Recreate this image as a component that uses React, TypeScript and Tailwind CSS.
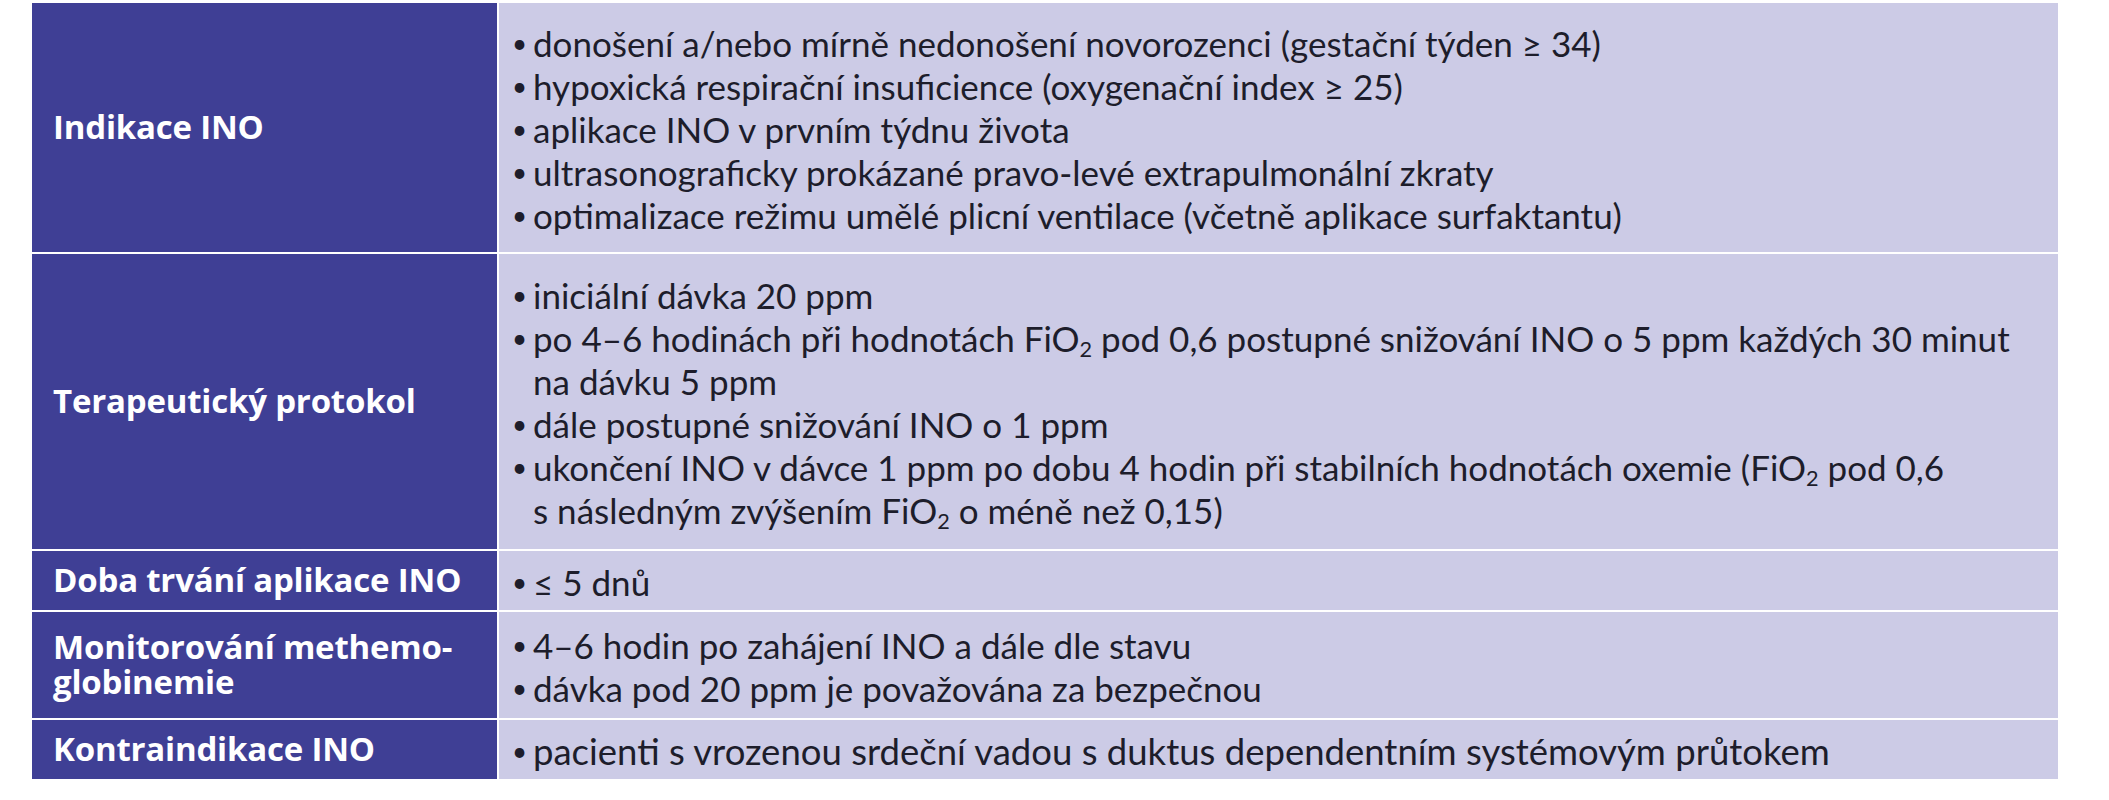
import React from "react";

type Row = {
  label: React.ReactNode;
  h: string;
  items: React.ReactNode[];
  big?: boolean;
};

const Sub = () => <sub className="text-[0.62em] leading-none">2</sub>;

const rows: Row[] = [
  {
    label: "Indikace INO",
    h: "h-[249px]",
    items: [
      "donošení a/nebo mírně nedonošení novorozenci (gestační týden ≥ 34)",
      "hypoxická respirační insuficience (oxygenační index ≥ 25)",
      "aplikace INO v prvním týdnu života",
      "ultrasonograficky prokázané pravo-levé extrapulmonální zkraty",
      "optimalizace režimu umělé plicní ventilace (včetně aplikace surfaktantu)",
    ],
  },
  {
    label: "Terapeutický protokol",
    h: "h-[295px]",
    items: [
      "iniciální dávka 20 ppm",
      <>
        po 4–6 hodinách při hodnotách FiO<Sub /> pod 0,6 postupné snižování INO o 5 ppm každých 30 minut
        <br />
        na dávku 5 ppm
      </>,
      "dále postupné snižování INO o 1 ppm",
      <>
        ukončení INO v dávce 1 ppm po dobu 4 hodin při stabilních hodnotách oxemie (FiO<Sub /> pod 0,6
        <br />s následným zvýšením FiO<Sub /> o méně než 0,15)
      </>,
    ],
  },
  {
    label: "Doba trvání aplikace INO",
    h: "h-[59px]",
    items: ["≤ 5 dnů"],
  },
  {
    label: (
      <>
        Monitorování methemo-
        <br />
        globinemie
      </>
    ),
    h: "h-[106px]",
    items: [
      "4–6 hodin po zahájení INO a dále dle stavu",
      "dávka pod 20 ppm je považována za bezpečnou",
    ],
  },
  {
    label: "Kontraindikace INO",
    h: "h-[59px]",
    big: true,
    items: ["pacienti s vrozenou srdeční vadou s duktus dependentním systémovým průtokem"],
  },
];

export default function App() {
  return (
    <div className="w-[2109px] h-[800px] bg-white pt-[3px] pl-[32px]">
      <div className="w-[2026px] flex flex-col gap-[2px]">
        {rows.map((r, i) => (
          <div key={i} className={`flex gap-[2px] ${r.h}`}>
            <div className="w-[465px] shrink-0 bg-[#3f3f95] flex items-center pl-[21px] pb-[2px]">
              <div className="font-['Open_Sans',sans-serif] font-bold text-[33px] leading-[35px] text-white tracking-[-0.2px]">
                {r.label}
              </div>
            </div>
            <div className="flex-1 bg-[#cccbe6] flex flex-col justify-center pl-[13px] pt-[3px] font-['Lato',sans-serif] text-[#1d1d2b]">
              {r.items.map((it, j) => (
                <div
                  key={j}
                  className={`flex whitespace-nowrap ${r.big ? "text-[36.5px] leading-[43px]" : "text-[35px] leading-[43px]"}`}
                >
                  <span className="w-[21px] shrink-0 text-[26px]">•</span>
                  <span>{it}</span>
                </div>
              ))}
            </div>
          </div>
        ))}
      </div>
    </div>
  );
}
